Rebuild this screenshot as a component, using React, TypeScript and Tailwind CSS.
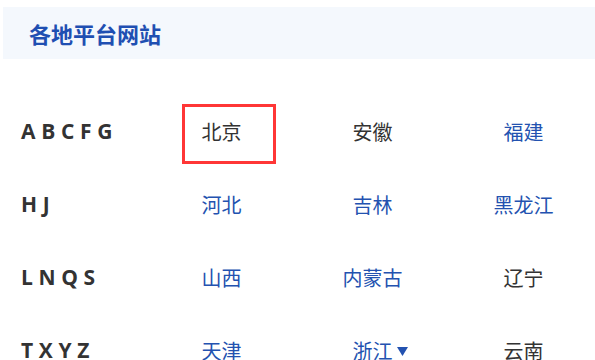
import React from 'react';

type City = { name: string; blue?: boolean; boxed?: boolean; menu?: boolean };

const rows: { letters: string; cities: City[] }[] = [
  {
    letters: 'A B C F G',
    cities: [{ name: '北京', boxed: true }, { name: '安徽' }, { name: '福建', blue: true }],
  },
  {
    letters: 'H J',
    cities: [{ name: '河北', blue: true }, { name: '吉林', blue: true }, { name: '黑龙江', blue: true }],
  },
  {
    letters: 'L N Q S',
    cities: [{ name: '山西', blue: true }, { name: '内蒙古', blue: true }, { name: '辽宁' }],
  },
  {
    letters: 'T X Y Z',
    cities: [{ name: '天津', blue: true }, { name: '浙江', blue: true, menu: true }, { name: '云南' }],
  },
];

const cjk = "font-['Noto_Sans_CJK_SC','Noto_Sans',sans-serif]";

export default function App() {
  return (
    <div className="w-[595px] h-[360px] overflow-hidden bg-white">
      <div className="ml-[3px] mt-[7px] h-[52px] bg-[#f4f8fd] flex items-center pl-[26px]">
        <h2 className={`${cjk} text-[22px] font-bold text-[#1f4fb2] leading-none`}>各地平台网站</h2>
      </div>

      <div className="ml-[3px] mt-[36px] w-[600px]">
        {rows.map((r) => (
          <div key={r.letters} className="grid grid-cols-[143px_151px_151px_151px] h-[73px] items-center">
            <div className="pl-[18px] font-['Open_Sans',sans-serif] font-bold text-[21px] text-[#333] whitespace-pre tracking-[0.1px]">
              {r.letters}
            </div>
            {r.cities.map((c) => (
              <div key={c.name} className="relative flex justify-center">
                <span
                  className={`${cjk} relative text-[20px] leading-[28px] ${c.blue ? 'text-[#2352b0]' : 'text-[#333]'}`}
                >
                  {c.name}
                  {c.menu && (
                    <svg
                      className="absolute left-full top-[10px] ml-[4px]"
                      width="11"
                      height="9"
                      viewBox="0 0 11 9"
                    >
                      <path d="M0 0h11L5.5 9z" fill="#2352b0" />
                    </svg>
                  )}
                </span>
                {c.boxed && (
                  <div className="absolute left-[36px] top-[-14px] w-[94px] h-[60px] border-[3px] border-[#ff3636]" />
                )}
              </div>
            ))}
          </div>
        ))}
      </div>
    </div>
  );
}
